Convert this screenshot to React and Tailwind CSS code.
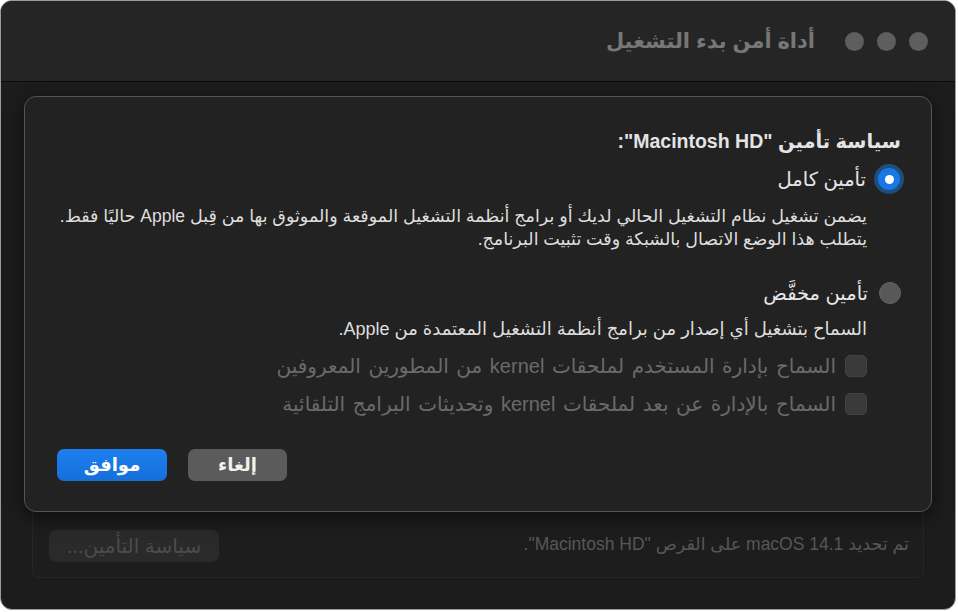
import React from 'react';

const font = { fontFamily: '"Liberation Sans", "DejaVu Sans", sans-serif' };

function TrafficLight() {
    return <span className="block w-[19px] h-[19px] rounded-full bg-[#5e5e5e]" />;
}

function Checkbox({ label }) {
    return (
        <div className="flex items-center gap-[9px] h-[26px]">
            <span className="block shrink-0 w-[22px] h-[22px] rounded-[5px] bg-[#3a3a3a] border border-[#444]" />
            <span className="text-[20px] leading-[26px] text-[#6a6a6a] [word-spacing:2px]">{label}</span>
        </div>
    );
}

export default function App() {
    return (
        <div className="w-[958px] h-[612px] bg-white" style={font}>
            <div dir="rtl" className="w-[956px] h-[610px] rounded-[12px] border border-[#9b9b9b] bg-[#1c1c1c] overflow-hidden flex flex-col">
                {/* title bar */}
                <div className="h-[81px] shrink-0 bg-[#252525] border-b border-[#0d0d0d] flex items-center pr-[27px]">
                    <div className="flex items-center gap-[13px]">
                        <TrafficLight />
                        <TrafficLight />
                        <TrafficLight />
                    </div>
                    <h1 className="mr-[30px] text-[21px] font-bold text-[#777]">أداة أمن بدء التشغيل</h1>
                </div>

                <div className="flex flex-col px-[23px] pt-[14px]">
                    {/* sheet */}
                    <div className="h-[416px] rounded-[12px] border border-[#555] bg-[#222] shadow-[0_6px_18px_rgba(0,0,0,0.5)] pr-[30px] pl-[32px] pt-[32px] flex flex-col relative z-10">
                        <h2 className="text-[19.5px] font-bold text-[#e4e4e4] leading-[24px]">سياسة تأمين "Macintosh HD":</h2>

                        <div className="mt-[11px] flex items-center gap-[8px] h-[30px] -mr-[3px]">
                            <span className="w-[30px] h-[30px] rounded-full bg-[#1d4f7e] flex items-center justify-center">
                                <span className="w-[22px] h-[22px] rounded-full bg-[#1a78e6] flex items-center justify-center">
                                    <span className="w-[9px] h-[9px] rounded-full bg-white" />
                                </span>
                            </span>
                            <span className="text-[19.5px] leading-[30px] text-[#e6e6e6]">تأمين كامل</span>
                        </div>
                        <p className="mt-[11px] mr-[34px] text-[17.5px] leading-[23px] text-[#dedede]">
                            يضمن تشغيل نظام التشغيل الحالي لديك أو برامج أنظمة التشغيل الموقعة والموثوق بها من قِبل Apple حاليًا فقط.
                            <br />
                            يتطلب هذا الوضع الاتصال بالشبكة وقت تثبيت البرنامج.
                        </p>

                        <div className="mt-[29px] flex items-center gap-[11px] h-[26px]">
                            <span className="w-[22px] h-[22px] rounded-full bg-[#585858] border border-[#646464]" />
                            <span className="text-[19.5px] leading-[26px] text-[#e6e6e6]">تأمين مخفَّض</span>
                        </div>
                        <p className="mt-[11px] mr-[34px] text-[18px] leading-[24px] text-[#dedede]">
                            السماح بتشغيل أي إصدار من برامج أنظمة التشغيل المعتمدة من Apple.
                        </p>
                        <div className="mt-[12px] mr-[34px] flex flex-col gap-[12px]">
                            <Checkbox label="السماح بإدارة المستخدم لملحقات kernel من المطورين المعروفين" />
                            <Checkbox label="السماح بالإدارة عن بعد لملحقات kernel وتحديثات البرامج التلقائية" />
                        </div>

                        <div className="mt-auto mb-[30px] flex justify-end gap-[21px]">
                            <button className="w-[99px] h-[32px] rounded-[7px] bg-[#5b5b5b] text-[18px] font-bold text-[#f0f0f0]">إلغاء</button>
                            <button className="w-[110px] h-[32px] rounded-[7px] bg-gradient-to-b from-[#1f7ff0] to-[#156fd9] text-[18px] font-bold text-white">موافق</button>
                        </div>
                    </div>

                    {/* content underneath the sheet */}
                    <div className="mx-[8px] h-[66px] rounded-b-[7px] border border-t-0 border-[#262626] bg-[#1d1d1d] flex items-center justify-between pr-[14px] pl-[16px]">
                        <span className="text-[17.5px] text-[#575757]">تم تحديد macOS 14.1 على القرص "Macintosh HD".</span>
                        <button className="w-[170px] h-[32px] rounded-[7px] bg-[#2a2a2a] text-[20px] text-[#4c4c4c] mt-[2px]">سياسة التأمين...</button>
                    </div>
                </div>
            </div>
        </div>
    );
}
